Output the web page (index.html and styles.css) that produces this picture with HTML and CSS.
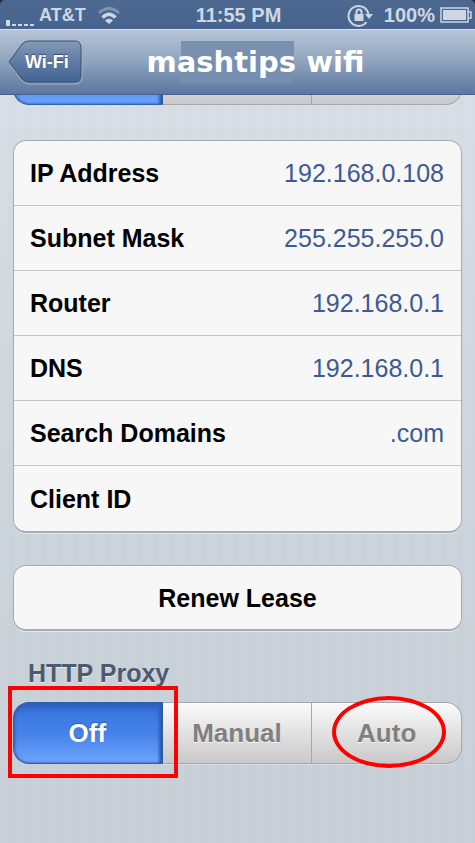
FILE: index.html
```html
<!DOCTYPE html>
<html lang="en">
<head>
<meta charset="utf-8">
<meta name="viewport" content="width=device-width, initial-scale=1">
<title>mashtips wifi</title>
<link rel="stylesheet" href="styles.css">
</head>
<body>
<header>
  <div class="status">
    <div class="status-left">
      <svg class="signal" width="30" height="16" viewBox="0 0 30 16" aria-hidden="true"><path d="M1 7h4v6H1zM7 11h4v2H7zM13 11h4v2h-4zM19 11h4v2h-4zM25 11h4v2h-4z" fill="currentColor"/></svg>
      <span class="carrier">AT&amp;T</span>
      <svg class="wifi" width="24" height="18" viewBox="0 0 24 18" fill="none" aria-hidden="true"><path d="M2 7Q12-2 22 7" stroke="#7f95b4" stroke-width="3"/><path d="M5.500 11.500Q12 5 18.500 11.500" stroke="currentColor" stroke-width="3.500"/><path d="M8 14.500Q12 11 16 14.500L12 18z" fill="currentColor"/></svg>
    </div>
    <span>11:55 PM</span>
    <div class="status-right">
      <svg width="26" height="24" viewBox="0 0 26 24" fill="none" aria-hidden="true"><path d="M19.500 19A10 10 0 1 1 21.500 12" stroke="currentColor" stroke-width="2"/><path d="M18 11h8l-4 5z" fill="currentColor"/><path d="M7.500 11h9v7h-9z" fill="currentColor"/><path d="M9.500 11V9a2.500 2.500 0 0 1 5 0v2" stroke="currentColor" stroke-width="2"/></svg>
      <span class="percent">100%</span>
      <svg width="32" height="16" viewBox="0 0 32 16" fill="none" aria-hidden="true"><path d="M1 1h27v14H1z" stroke="currentColor" stroke-width="1.500"/><path d="M28 5h3v6h-3" stroke="currentColor" stroke-width="1.500"/><path d="M3 3h23v10H3z" fill="currentColor"/></svg>
    </div>
  </div>
  <nav class="navbar">
    <a class="back" href="#wifi">
      <svg class="back-shape" viewBox="0 0 76 45" aria-hidden="true"><defs><linearGradient id="back-fill" x2="0" y2="1"><stop stop-color="#8699b7"/><stop offset=".5" stop-color="#607ba4"/><stop offset="1" stop-color="#426594"/></linearGradient></defs><path d="M1 23L14 5Q17 2 21 2H67Q74 2 74 9V37Q74 44 67 44H21Q17 44 14 41Z" fill="none" stroke="#a3b3c9"/><path d="M1 22L14 4Q17 1 21 1H67Q73 1 73 8V35Q73 42 67 42H21Q17 42 14 39Z" fill="url(#back-fill)" stroke="#3f506b"/></svg>
      <span class="back-label">Wi-Fi</span>
    </a>
    <h1><span class="mark">mashtips</span> wifi</h1>
  </nav>
</header>
<main>
  <div class="peek" aria-hidden="true">
    <div class="segments"><span class="segment selected"></span><span class="segment"></span><span class="segment"></span></div>
  </div>
  <dl class="card list">
    <div class="row"><dt>IP Address</dt><dd>192.168.0.108</dd></div>
    <div class="row"><dt>Subnet Mask</dt><dd>255.255.255.0</dd></div>
    <div class="row"><dt>Router</dt><dd>192.168.0.1</dd></div>
    <div class="row"><dt>DNS</dt><dd>192.168.0.1</dd></div>
    <div class="row"><dt>Search Domains</dt><dd>.com</dd></div>
    <div class="row"><dt>Client ID</dt><dd></dd></div>
  </dl>
  <button class="card renew" type="button">Renew Lease</button>
  <h2 id="proxy">HTTP Proxy</h2>
  <div class="segments" role="group" aria-labelledby="proxy">
    <button class="segment selected boxed" type="button" aria-pressed="true">Off</button>
    <button class="segment" type="button" aria-pressed="false">Manual</button>
    <button class="segment circled" type="button" aria-pressed="false">Auto</button>
  </div>
</main>
</body>
</html>
```
FILE: styles.css
```css
* {
  box-sizing: border-box;
}

body {
  margin: 0;
  min-height: 100vh;
  font-family: "Liberation Sans", Arial, sans-serif;
  font-size: 25px;
  line-height: 32px;
  background:
    repeating-linear-gradient(90deg, rgba(255, 255, 255, 0.05) 0 9px, transparent 9px 16px),
    linear-gradient(#d8dfe6, #c8d0d8 75%, #c5cdd5);
}

header {
  background: #222c3b;
}

.status {
  display: grid;
  grid-template-columns: 1fr auto 1fr;
  align-items: center;
  height: 29px;
  padding: 0 3px 0 5px;
  color: #ced7e3;
  font-size: 20px;
  font-weight: bold;
  line-height: 28px;
  background: linear-gradient(#4d6990, #46648f);
  border-radius: 5px 5px 0 0;
}

.status-left,
.status-right {
  display: flex;
  align-items: center;
}

.status-right {
  justify-content: flex-end;
  gap: 5px;
}

.percent {
  margin-left: 6px;
}

.carrier {
  margin-left: 4px;
  font-size: 18px;
}

.signal {
  margin-top: 12px;
}

.wifi {
  margin-left: 11px;
}

.navbar {
  display: grid;
  grid-template-columns: 1fr auto 1fr;
  align-items: center;
  height: 66px;
  padding: 0 8px;
  background: linear-gradient(#b7c5d7, #8ea3be 50%, #5a779e);
  border-top: 1px solid #d6e0ea;
  border-bottom: 1px solid #44628b;
}

.back {
  display: grid;
  align-items: center;
  width: 76px;
  color: #fff;
  font-size: 18px;
  font-weight: bold;
  text-decoration: none;
  text-shadow: 0 -1px 1px #33496b;
}

.back-shape,
.back-label {
  grid-area: 1 / 1;
}

.back-label {
  padding-left: 17px;
}

h1 {
  margin: 0;
  padding-left: 36px;
  color: #fff;
  font-family: "DejaVu Sans", Verdana, sans-serif;
  font-size: 29px;
  line-height: 42px;
}

.mark {
  display: inline-block;
  background: linear-gradient(#7b90b0, #758eaf) no-repeat 34px 0 / calc(100% - 36px) 100%;
}

main {
  display: flow-root;
  padding: 0 13px;
}

.peek {
  display: flex;
  align-items: flex-end;
  height: 10px;
  margin-bottom: 35px;
  overflow: hidden;
}

.card {
  background: #f7f7f7;
  border: 1px solid #a4adb7;
  border-bottom: 2px solid #a5aeb7;
  border-radius: 13px;
  box-shadow: 0 1px 0 #e2e7ec;
}

.list {
  margin: 0 0 32px;
}

.row {
  display: flex;
  align-items: center;
  justify-content: space-between;
  height: 65px;
  padding: 0 17px 0 16px;
  border-bottom: 1px solid #c4c6c9;
}

.row:last-child {
  border-bottom: 0;
}

dt {
  color: #000;
  font-weight: bold;
}

dd {
  margin: 0;
  color: #3d5a93;
}

.renew {
  display: block;
  width: 100%;
  height: 66px;
  padding: 0;
  color: #000;
  font: inherit;
  font-weight: bold;
}

h2 {
  margin: 26px 15px 13px;
  color: #4d5a70;
  font-size: 25px;
  line-height: 32px;
  text-shadow: 0 1px 0 #e8edf2;
}

.segments {
  display: grid;
  flex: 1 0 auto;
  grid-template-columns: repeat(3, 1fr);
  height: 62px;
}

.segment {
  position: relative;
  padding: 0;
  color: #808080;
  font: inherit;
  font-size: 26px;
  font-weight: bold;
  text-shadow: 0 1px 0 #f5f5f5;
  background: linear-gradient(#fbfbfb, #e4e4e4 45%, #c9c9c9);
  border: 1px solid #a5a8ac;
  border-left: 0;
  box-shadow: 0 1px 0 #d9dfe5;
}

.segment:last-child {
  border-radius: 0 16px 16px 0;
}

.selected {
  color: #fff;
  text-shadow: 0 -1px 1px #2e5fae;
  background: linear-gradient(#2b61c3, #3c79e3 20%, #4581e8 50%, #6da4fe);
  border: 1px solid #315fa9;
  border-right: 2px solid #2b59a6;
  border-radius: 16px 0 0 16px;
  box-shadow: inset -2px 0 3px #315fae, inset 1px 1px 3px #315fae;
}

.boxed::after,
.circled::after {
  content: "";
  position: absolute;
  border: 3px solid #f00;
}

.boxed::after {
  inset: -17px -17px -15px -6px;
  z-index: 1;
  border-width: 4px;
}

.circled::after {
  inset: -7px 15px -5px 20px;
  border-width: 4px;
  border-radius: 50%;
}
```
